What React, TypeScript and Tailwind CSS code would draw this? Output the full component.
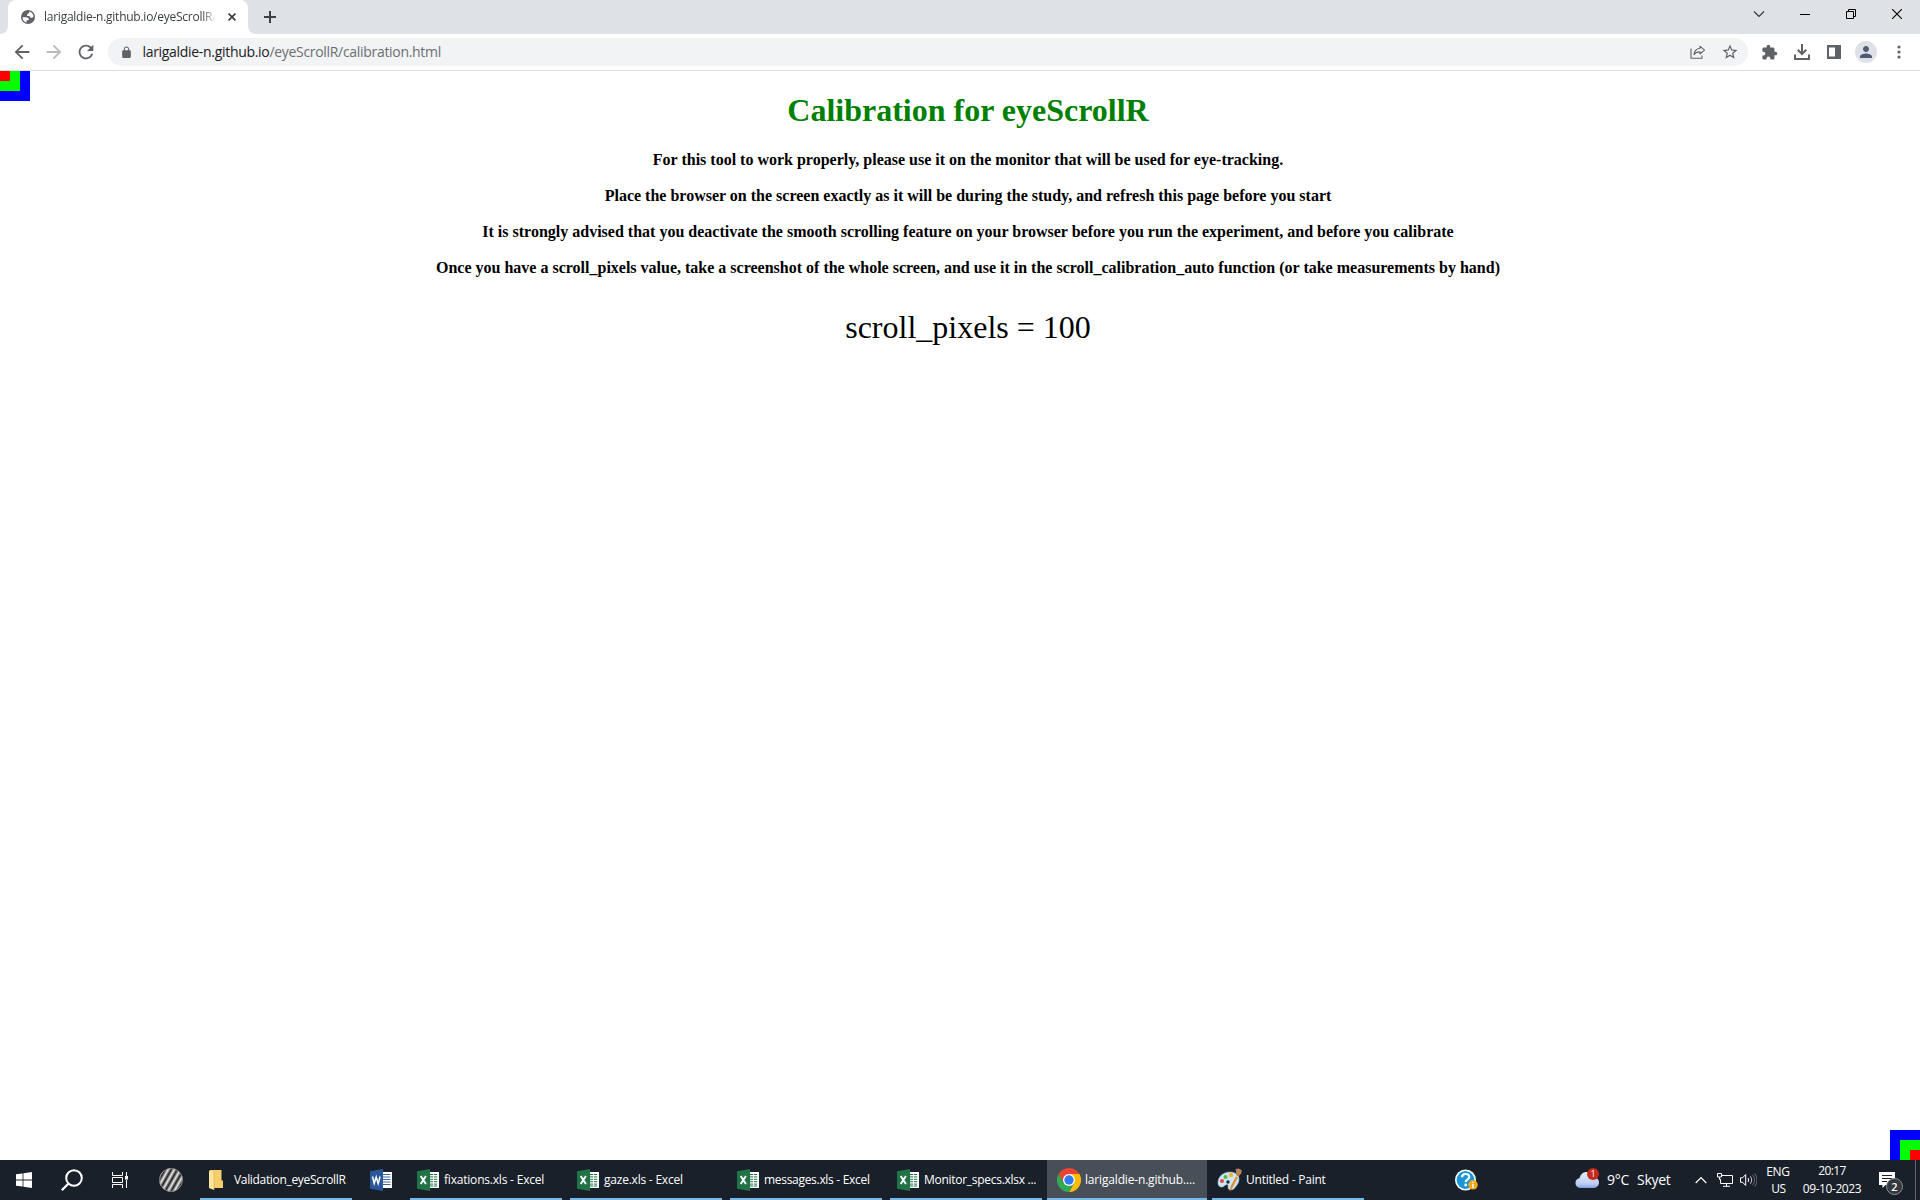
import type { ReactNode } from "react";

function Icon({ w, h, className = "", children }: { w: number; h: number; className?: string; children: ReactNode }) {
  return (
    <svg width={w} height={h} viewBox={`0 0 ${w} ${h}`} fill="none" className={`block shrink-0 ${className}`}>
      {children}
    </svg>
  );
}

function Material({ size = 18, d, className = "" }: { size?: number; d: string; className?: string }) {
  return (
    <svg width={size} height={size} viewBox="0 0 24 24" fill="currentColor" className={`block shrink-0 ${className}`}>
      <path d={d} />
    </svg>
  );
}

function TabStrip() {
  return (
    <div className="flex h-[34px] bg-[#dee1e6]">
      <div className="flex w-2 items-end overflow-hidden bg-white">
        <div className="h-full w-2 rounded-br-lg bg-[#dee1e6]" />
      </div>
      <div className="flex w-[240px] items-center rounded-t-lg bg-white pl-[13px]">
        <Icon w={14} h={14}>
          <circle cx="7" cy="7" r="7" fill="#5f6368" />
          <path d="M1.500 7.200h3.300c2.300 0 3.200 1.100 3 3.100H5.600v2.100C3 12 1.500 9.800 1.500 7.200z" fill="#fff" />
          <path d="M8.300 1.600c2.600.600 4.200 2.800 4.200 5.200-.4.600-1 .9-1.800.9-1.400 0-2.100-.6-2.100-1.800H6.100C5.900 4.100 6.600 3.200 8 3.200c0-.7.100-1.200.3-1.600z" fill="#fff" />
        </Icon>
        <div className="ml-[9px] w-[171px] overflow-hidden text-xs leading-4 tracking-[-0.25px] whitespace-nowrap text-[#3c4043] [mask-image:linear-gradient(to_right,black_158px,transparent_172px)]">
          larigaldie-n.github.io/eyeScrollR/calibration.html
        </div>
        <Icon w={8} h={8} className="ml-[13px]">
          <path d="M.6.600l6.800 6.800M7.400.6.600 7.400" stroke="#3c4043" strokeWidth="1.700" />
        </Icon>
      </div>
      <div className="flex w-2 overflow-hidden bg-white">
        <div className="h-full w-2 rounded-bl-lg bg-[#dee1e6]" />
      </div>
      <div className="flex flex-1 items-center pl-2">
        <Icon w={12} h={12}>
          <path d="M6 0v12M0 6h12" stroke="#3c4043" strokeWidth="2" />
        </Icon>
      </div>
      <div className="flex h-7 text-black">
        <div className="flex w-[46px] items-center justify-center">
          <Icon w={12} h={8}><path d="M1 1.500l5 5 5-5" stroke="#333" strokeWidth="1.100" /></Icon>
        </div>
        <div className="flex w-[46px] items-center justify-center">
          <div className="mt-px h-px w-[10px] bg-black" />
        </div>
        <div className="flex w-[46px] items-center justify-center">
          <Icon w={10} h={10}>
            <path d="M.5 2.500h7v7h-7zM2.500 2.500v-2h7v7h-2" stroke="#000" />
          </Icon>
        </div>
        <div className="flex w-[46px] items-center justify-center">
          <Icon w={10} h={10}><path d="M0 0l10 10M10 0L0 10" stroke="#000" strokeWidth="1.100" /></Icon>
        </div>
      </div>
    </div>
  );
}

function Toolbar() {
  return (
    <div className="flex h-9 items-center bg-white text-[#5f6368]">
      <div className="flex w-[108px] items-center pl-[11px]">
        <Material size={22} d="M20 11H7.830l5.590-5.590L12 4l-8 8 8 8 1.410-1.410L7.830 13H20v-2z" />
        <Material size={22} className="ml-[10px] text-[#bababa]" d="M12 4l-1.410 1.410L16.170 11H4v2h12.170l-5.580 5.590L12 20l8-8z" />
        <Material size={22} className="ml-[10px]" d="M17.650 6.350C16.200 4.900 14.210 4 12 4c-4.420 0-7.990 3.580-7.990 8s3.570 8 7.990 8c3.730 0 6.840-2.550 7.730-6h-2.080c-.82 2.330-3.040 4-5.650 4-3.310 0-6-2.690-6-6s2.690-6 6-6c1.660 0 3.140.69 4.220 1.780L13 11h7V4l-2.350 2.350z" />
      </div>
      <div className="flex h-7 w-[1640px] items-center rounded-full bg-[#f1f3f4]">
        <Material size={13} className="ml-[11.500px]" d="M18 8h-1V6c0-2.760-2.240-5-5-5S7 3.240 7 6v2H6c-1.100 0-2 .9-2 2v10c0 1.100.9 2 2 2h12c1.100 0 2-.9 2-2V10c0-1.100-.9-2-2-2zM8.900 6c0-1.710 1.390-3.100 3.100-3.100s3.100 1.390 3.100 3.100v2H8.900V6z" />
        <div className="ml-[10px] flex-1 text-sm leading-5 tracking-[-0.31px] whitespace-nowrap text-[#6b6f73]">
          <span className="text-[#202124]">larigaldie-n.github.io</span>/eyeScrollR/calibration.html
        </div>
        <Icon w={16} h={14} className="mr-[15px]">
          <path d="M1 3.500v9.800h11v-2.800" stroke="#5f6368" strokeWidth="1.100" />
          <path d="M10 1.200l4.500 3.900-4.500 3.900V6.900C7.200 6.900 5.300 7.500 4 9.600c.4-3.300 2.300-5.900 6-6.300z" stroke="#5f6368" strokeWidth="1.100" strokeLinejoin="round" />
        </Icon>
        <Material size={18} className="mr-[9px]" d="M22 9.240l-7.190-.62L12 2 9.190 8.630 2 9.240l5.460 4.730L5.820 21 12 17.270 18.180 21l-1.630-7.030L22 9.240zM12 15.400l-3.760 2.270 1-4.280-3.320-2.880 4.380-.38L12 6.100l1.710 4.040 4.380.38-3.320 2.880 1 4.280L12 15.400z" />
      </div>
      <div className="flex flex-1 items-center pl-[6px]">
        <div className="flex w-8 justify-center">
          <Material size={17} className="-ml-px" d="M20.500 11H19V7c0-1.100-.9-2-2-2h-4V3.500C13 2.120 11.880 1 10.500 1S8 2.120 8 3.500V5H4c-1.100 0-1.990.9-1.990 2v3.800H3.500c1.490 0 2.700 1.210 2.700 2.700s-1.210 2.700-2.700 2.700H2V20c0 1.100.9 2 2 2h3.800v-1.500c0-1.490 1.210-2.700 2.700-2.700 1.490 0 2.700 1.210 2.700 2.700V22H17c1.100 0 2-.9 2-2v-4h1.500c1.380 0 2.500-1.120 2.500-2.500S21.880 11 20.500 11z" />
        </div>
        <div className="flex w-8 justify-center">
          <Icon w={16} h={16}>
            <path d="M8 0v9.500M3.700 5.800L8 10l4.300-4.200M1 10.500V15h14v-4.500" stroke="#5f6368" strokeWidth="2" />
          </Icon>
        </div>
        <div className="flex w-8 justify-center">
          <Icon w={14} h={14}>
            <path fillRule="evenodd" d="M0 0h14v14H0zM2 2.500v9h6v-9z" fill="#5f6368" />
          </Icon>
        </div>
        <div className="flex w-8 justify-center">
          <div className="flex size-[22px] items-center justify-center rounded-full bg-[#dee1e6]">
            <Material size={18} className="text-[#515b73]" d="M12 12c2.210 0 4-1.790 4-4s-1.790-4-4-4-4 1.790-4 4 1.790 4 4 4zm0 2c-2.670 0-8 1.340-8 4v2h16v-2c0-2.660-5.330-4-8-4z" />
          </div>
        </div>
        <div className="flex w-8 justify-center">
          <Icon w={4} h={14} className="ml-px">
            <g fill="#5f6368"><circle cx="2" cy="2" r="1.600" /><circle cx="2" cy="7" r="1.600" /><circle cx="2" cy="12" r="1.600" /></g>
          </Icon>
        </div>
      </div>
    </div>
  );
}

const notes = [
  "For this tool to work properly, please use it on the monitor that will be used for eye-tracking.",
  "Place the browser on the screen exactly as it will be during the study, and refresh this page before you start",
  "It is strongly advised that you deactivate the smooth scrolling feature on your browser before you run the experiment, and before you calibrate",
  "Once you have a scroll_pixels value, take a screenshot of the whole screen, and use it in the scroll_calibration_auto function (or take measurements by hand)",
];

function Page() {
  return (
    <div className="relative flex-1 overflow-hidden bg-white pl-4 text-center font-['Liberation_Serif',serif] text-black">
      <h1 className="mt-[21px] text-[32px] leading-9 font-bold text-[#008000]">Calibration for eyeScrollR</h1>
      <div className="mt-[23px] flex flex-col gap-[18px]">
        {notes.map((n) => (
          <p key={n} className="text-base leading-[18px] font-bold whitespace-nowrap">{n}</p>
        ))}
      </div>
      <p className="mt-8 text-[32px] leading-9">scroll_pixels = 100</p>
      <div className="absolute top-0 left-0 size-[30px] bg-[#0000ff]">
        <div className="size-5 bg-[#00ff00]"><div className="size-[10px] bg-[#ff0000]" /></div>
      </div>
      <div className="absolute right-0 bottom-0 flex size-[30px] items-end justify-end bg-[#0000ff]">
        <div className="flex size-5 items-end justify-end bg-[#00ff00]"><div className="size-[10px] bg-[#ff0000]" /></div>
      </div>
    </div>
  );
}

function OfficeIcon({ kind }: { kind: "W" | "X" }) {
  const main = kind === "W" ? "#2b579a" : "#217346";
  return (
    <Icon w={22} h={22}>
      <path d="M12 3h10v16H12z" fill="#fff" />
      {kind === "W" ? (
        <path d="M13 5.500h7.500M13 8h7.500M13 10.500h7.500M13 13h7.500M13 15.500h7.500" stroke="#3c68b0" />
      ) : (
        <g>
          <path d="M13 5.500h7.500M13 7.900h7.500M13 10.300h7.500M13 12.700h7.500M13 15.100h7.500M13 17h7.500" stroke="#217346" />
          <path d="M16.500 4v14M20.700 4v14" stroke="#fff" strokeWidth=".8" />
        </g>
      )}
      <path d="M0 2.300L13 0v22L0 19.700z" fill={main} />
      {kind === "W" ? (
        <path d="M2.500 7.500l1.700 7 2-6.500 2 6.500 1.900-7" stroke="#fff" strokeWidth="1.500" />
      ) : (
        <path d="M3.700 7l5.200 8M8.900 7l-5.200 8" stroke="#fff" strokeWidth="1.900" />
      )}
    </Icon>
  );
}

function FolderIcon() {
  return (
    <Icon w={14} h={20}>
      <path d="M1 0h11.500v10.500H14V18H1z" fill="#f4cf6c" />
      <path d="M0 .5L5 2v18l-5-2z" fill="#ffe69c" />
      <path d="M5 2v18" stroke="#d9ae4a" strokeWidth=".7" />
    </Icon>
  );
}

function ChromeIcon() {
  return (
    <Icon w={24} h={24}>
      <path d="M1.600 6A12 12 0 0 1 22.400 6H12L6.800 15z" fill="#ea4335" />
      <path d="M22.400 6A12 12 0 0 1 12 24l5.200-9L12 6z" fill="#fbbc05" />
      <path d="M12 24A12 12 0 0 1 1.600 6l5.200 9h10.400z" fill="#34a853" />
      <circle cx="12" cy="12" r="6" fill="#fff" />
      <circle cx="12" cy="12" r="4.700" fill="#2f7bf0" />
    </Icon>
  );
}

function PaintIcon() {
  return (
    <Icon w={25} h={25}>
      <path d="M1 15.500C.5 9 6 4 13 4c5.500 0 9 3.300 9 7.500 0 4-3 6.500-4.500 8.700-1.500 2-5.500 2-6.300.3-.7-1.700.7-2.700-.6-3.700-1.800-1.300-3.600 2.600-6.100 2.300C2.500 18.900 1.200 17.500 1 15.500z" fill="#cde6f5" stroke="#8db9d6" strokeWidth=".6" />
      <circle cx="5" cy="13" r="2" fill="#e8473d" />
      <circle cx="8.500" cy="9" r="2" fill="#55b53c" />
      <circle cx="14" cy="7" r="2.200" fill="#f5b42e" />
      <circle cx="11" cy="14" r="1.700" fill="#1b2a38" />
      <path d="M12.500 23.800l1-5L20 6.500l2 1-6.500 12.300z" fill="#e58a2d" />
      <path d="M19.500 6.800l-.9-5.800 3-.5 3.200 1.800-.5 3-2.300 2.700z" fill="#b98355" />
      <path d="M19 8l3 1.500" stroke="#e8e8e8" />
    </Icon>
  );
}

function Task({ icon, label, className, textClass }: { icon: ReactNode; label: string; className: string; textClass: string }) {
  return (
    <div className={`flex h-full shrink-0 items-center border-b-2 border-[#76b9ed] pt-0.5 ${className}`}>
      {icon}
      <span className={`whitespace-nowrap ${textClass}`}>{label}</span>
    </div>
  );
}

function Taskbar() {
  return (
    <div className="flex h-10 items-center bg-[#1a2029] text-xs leading-4 text-white">
      <div className="flex w-12 justify-center">
        <Icon w={16} h={16}>
          <path d="M0 2.300L6.600 1.400v6.200H0zM7.400 1.200L16 0v7.600H7.400zM0 8.400h6.600v6.200L0 13.700zM7.400 8.400H16V16l-8.600-1.200z" fill="#fff" />
        </Icon>
      </div>
      <div className="flex w-12 justify-center">
        <Icon w={22} h={22}>
          <circle cx="13" cy="9" r="7.800" stroke="#fff" strokeWidth="2" />
          <path d="M7.500 14.500L.8 21.200" stroke="#fff" strokeWidth="2.200" />
        </Icon>
      </div>
      <div className="flex w-12 justify-center">
        <Icon w={16} h={16}>
          <path d="M.5 0v3.500h10V0M.5 16v-3.500h10V16M.5 5.500h10v5H.5zM14.500 0v4M14.500 8v8" stroke="#fff" />
          <path d="M13 4h3v3.500h-3z" fill="#fff" />
        </Icon>
      </div>
      <div className="flex w-[54px] justify-center">
        <Icon w={24} h={24}>
          <defs>
            <linearGradient id="bands" x1="1" y1="0" x2="3.300" y2="1.300" gradientUnits="userSpaceOnUse" spreadMethod="reflect">
              <stop offset="0" stopColor="#1c1c1c" />
              <stop offset="1" stopColor="#ededed" />
            </linearGradient>
          </defs>
          <circle cx="12" cy="12" r="11.800" fill="url(#bands)" />
          <circle cx="12" cy="12" r="11.400" stroke="#9a9a9a" strokeWidth=".8" />
        </Icon>
      </div>
      <Task className="ml-0.5 w-[152px] pl-[9px]" icon={<FolderIcon />} label="Validation_eyeScrollR" textClass="ml-[11px] tracking-[-0.33px]" />
      <div className="flex w-[58px] justify-center"><OfficeIcon kind="W" /></div>
      <Task className="w-[152px] pl-[7px]" icon={<OfficeIcon kind="X" />} label="fixations.xls - Excel" textClass="ml-[5px] tracking-[-0.2px]" />
      <Task className="ml-2 w-[152px] pl-[7px]" icon={<OfficeIcon kind="X" />} label="gaze.xls - Excel" textClass="ml-[5px] tracking-[-0.22px]" />
      <Task className="ml-2 w-[152px] pl-[7px]" icon={<OfficeIcon kind="X" />} label="messages.xls - Excel" textClass="ml-[5px] tracking-[-0.3px]" />
      <Task className="ml-2 w-[152px] pl-[7px]" icon={<OfficeIcon kind="X" />} label="Monitor_specs.xlsx ..." textClass="ml-[5px] tracking-[-0.28px]" />
      <Task className="ml-[5px] w-40 bg-[#484f58] pl-[10px]" icon={<ChromeIcon />} label="larigaldie-n.github...." textClass="ml-1 tracking-[-0.17px]" />
      <Task className="ml-[5px] w-[152px] pl-[5px]" icon={<PaintIcon />} label="Untitled - Paint" textClass="ml-[4px] tracking-[-0.24px]" />
      <div className="ml-[90px] w-[120px]">
        <Icon w={25} h={24} className="mt-px">
          <circle cx="11.500" cy="11" r="10.500" fill="#fff" />
          <circle cx="11.500" cy="11" r="8.900" fill="#1b95d4" />
          <path d="M8 8.300c0-4.300 7.200-4.300 7.200-.4 0 2.600-3.500 2.700-3.500 5" stroke="#fff" strokeWidth="2.200" />
          <circle cx="11.700" cy="16" r="1.400" fill="#fff" />
          <circle cx="19" cy="15.800" r="4.800" fill="#f2a71b" />
          <path d="M19 15v4M19 12.700v1.300" stroke="#fff" strokeWidth="1.500" />
        </Icon>
      </div>
      <div className="relative ml-px">
        <Icon w={24} h={22}>
          <defs>
            <linearGradient id="cloud" x1="0" y1="0" x2="0" y2="1">
              <stop offset="0" stopColor="#e6edfb" /><stop offset=".75" stopColor="#bccdf3" /><stop offset="1" stopColor="#7d9fe0" />
            </linearGradient>
          </defs>
          <path d="M5 19a4.900 4.900 0 0 1-.5-9.700C5.500 5 8.500 3 11.500 3c3.500 0 6 2 7 5.300 3.500 0 5.500 2.500 5.500 5.300S21.800 19 19 19z" fill="url(#cloud)" />
        </Icon>
        <div className="absolute -top-px left-3 flex size-3 items-center justify-center rounded-full bg-[#c42b1c] text-[9px] leading-3">1</div>
      </div>
      <span className="ml-2 w-[30px] text-sm leading-5 tracking-[-0.3px]">9°C</span>
      <span className="w-[58px] text-sm leading-5 tracking-[-0.3px]">Skyet</span>
      <Icon w={12} h={8}><path d="M.7 7L6 1.500 11.300 7" stroke="#fff" strokeWidth="1.200" /></Icon>
      <Icon w={16} h={14} className="ml-[10px]">
        <path d="M5 2.500h10.500v8H3.500V6M9.500 10.500v2.500M6 13.300h7" stroke="#fff" />
        <path d="M.5.500h4v3.500h-4zM2.500 4v2.500h1" stroke="#fff" />
      </Icon>
      <Icon w={17} h={14} className="ml-[7px]">
        <path d="M.5 4.800h2.200L5.700 1.500v11L2.700 9.300H.5zM8 5c.8 1.200.8 2.800 0 4" stroke="#fff" />
        <path d="M10.300 3.300c1.800 2.300 1.800 5.200 0 7.400" stroke="#ccc" />
        <path d="M12.500 1.800c2.700 3.300 2.700 7.200 0 10.400M14.700.4c3 4 3 9.200 0 13.200" stroke="#6a6f76" />
      </Icon>
      <div className="ml-[5px] flex h-full w-[32px] flex-col items-center pt-1">
        <span className="tracking-[-0.3px]">ENG</span>
        <span className="mt-px ml-px tracking-[-0.4px]">US</span>
      </div>
      <div className="ml-[6px] flex h-full w-[64px] flex-col items-center pt-[3px]">
        <span className="tracking-[-0.6px]">20:17</span>
        <span className="mt-[2px] tracking-[-0.42px]">09-10-2023</span>
      </div>
      <div className="relative ml-[15px] h-full w-9">
        <Icon w={16} h={16} className="mt-3">
          <path d="M0 0h16v13H6.500L3.500 16v-3H0z" fill="#fff" />
          <path d="M3 3.500h10M3 6.500h10M3 9.500h5" stroke="#1a2029" />
        </Icon>
        <div className="absolute top-[18px] left-[7px] flex size-[17px] items-center justify-center rounded-full border border-[#8b8f94] bg-[#35393f] text-[11px] leading-3 font-semibold">2</div>
      </div>
      <div className="h-full w-px bg-[#62666c]" />
    </div>
  );
}

export default function App() {
  return (
    <div className="flex h-[1200px] w-[1920px] flex-col overflow-hidden bg-white font-['Open_Sans',sans-serif]">
      <TabStrip />
      <Toolbar />
      <div className="h-px bg-[#dadce0]" />
      <Page />
      <Taskbar />
    </div>
  );
}
